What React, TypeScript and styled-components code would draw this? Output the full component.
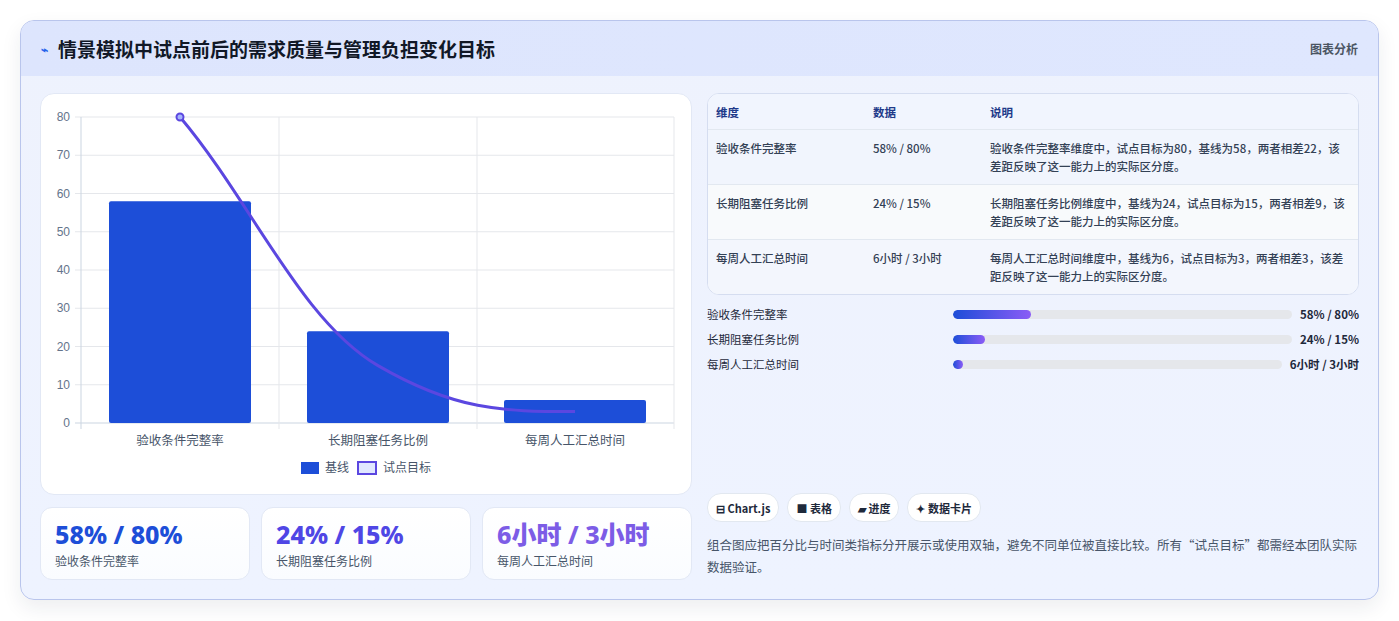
import React from 'react';
import styled, { createGlobalStyle } from 'styled-components';

const Global = createGlobalStyle`
  body { margin: 0; background: #f3f4f6; font-family: "Noto Sans CJK SC", "Noto Sans", sans-serif; color: #1e293b; }
`;

const rows = [
  { name: '验收条件完整率', data: '58% / 80%', note: '验收条件完整率维度中，试点目标为80，基线为58，两者相差22，该差距反映了这一能力上的实际区分度。', fill: 23, color: '#1d4ed8' },
  { name: '长期阻塞任务比例', data: '24% / 15%', note: '长期阻塞任务比例维度中，基线为24，试点目标为15，两者相差9，该差距反映了这一能力上的实际区分度。', fill: 9.5, color: '#4f46e5' },
  { name: '每周人工汇总时间', data: '6小时 / 3小时', note: '每周人工汇总时间维度中，基线为6，试点目标为3，两者相差3，该差距反映了这一能力上的实际区分度。', fill: 3, color: '#7c5ce6' },
];

const Page = styled.div`
  padding: 20px 20px 21px 20px;
  background: #fff;
`;
const Card = styled.div`
  border: 1px solid #b9c5ec;
  border-radius: 14px;
  background: linear-gradient(180deg, #eef2fd 0%, #eef3ff 100%);
  box-shadow: 0 8px 20px rgba(30, 41, 59, 0.08);
  overflow: hidden;
`;
const Header = styled.div`
  height: 55px;
  display: flex;
  align-items: center;
  justify-content: space-between;
  padding: 0 20px;
  background: linear-gradient(90deg, #dde5fd, #dfe7fe);
`;
const Title = styled.h1`
  margin: 0;
  font-size: 19px;
  font-weight: 700;
  color: #111827;
  display: flex;
  align-items: center;
  gap: 10px;
`;
const Tag = styled.span`
  font-size: 12px;
  font-weight: 700;
  color: #4b5563;
`;
const Body = styled.div`
  display: grid;
  grid-template-columns: 652px 652px;
  gap: 15px;
  padding: 17px 19px 19px 19px;
`;
const Col = styled.div`
  display: flex;
  flex-direction: column;
`;
const ChartBox = styled.div`
  height: 402px;
  background: #fff;
  border: 1px solid #e2e8f5;
  border-radius: 14px;
  box-sizing: border-box;
`;
const Stats = styled.div`
  display: grid;
  grid-template-columns: repeat(3, 1fr);
  gap: 11px;
  margin-top: 12px;
`;
const Stat = styled.div`
  height: 73px;
  box-sizing: border-box;
  padding: 10px 14px;
  background: linear-gradient(180deg, #fff, #fafcff);
  border: 1px solid #e2e8f5;
  border-radius: 12px;
`;
const StatValue = styled.div<{ $c: string }>`
  font-size: 25px;
  font-weight: 800;
  line-height: 32px;
  color: ${p => p.$c};
  font-family: "Noto Sans", "Noto Sans CJK SC", sans-serif;
`;
const StatLabel = styled.div`
  font-size: 12px;
  color: #475569;
  margin-top: 2px;
`;
const Table = styled.div`
  border: 1px solid #d5ddf0;
  border-radius: 12px;
  overflow: hidden;
  background: #fff;
`;
const Row = styled.div<{ $bg: string; $head?: boolean }>`
  display: grid;
  grid-template-columns: 157px 117px 1fr;
  padding: ${p => (p.$head ? '9px 8px 8px' : '9px 8px 9px')};
  background: ${p => p.$bg};
  border-bottom: 1px solid #e2e8f0;
  font-size: 11.5px;
  line-height: 18px;
  font-weight: ${p => (p.$head ? 700 : 500)};
  color: ${p => (p.$head ? '#1e3a8a' : '#334155')};
  &:last-child { border-bottom: none; }
`;
const Bars = styled.div`
  display: flex;
  flex-direction: column;
  gap: 6px;
  margin-top: 10px;
`;
const BarRow = styled.div`
  display: grid;
  grid-template-columns: 238px 1fr auto;
  align-items: center;
  gap: 8px;
  font-size: 11.5px;
  line-height: 19px;
  color: #1e293b;
`;
const Track = styled.div`
  height: 9px;
  background: #e5e7eb;
  border-radius: 5px;
  overflow: hidden;
`;
const Fill = styled.div`
  height: 100%;
  min-width: 9px;
  border-radius: 5px;
  background: linear-gradient(90deg, #1d4ed8, #8b5cf6);
`;
const Val = styled.span`
  font-weight: 700;
  text-align: right;
`;
const Chips = styled.div`
  display: flex;
  gap: 8px;
  margin-top: auto;
`;
const Chip = styled.span`
  height: 27px;
  padding: 0 8px;
  display: inline-flex;
  align-items: center;
  gap: 4px;
  background: #fff;
  border: 1px solid #e2e8f0;
  border-radius: 14px;
  font-size: 11px;
  font-weight: 700;
  color: #1e293b;
`;
const Note = styled.p`
  margin: 12px 0 2px;
  font-size: 12.5px;
  line-height: 22px;
  color: #475569;
`;

const y = (v: number) => 422 - v * 3.825;

const Chart = () => {
  const cats = ['验收条件完整率', '长期阻塞任务比例', '每周人工汇总时间'];
  const base = [58, 24, 6];
  const cx = [179, 377, 574];
  const xs = [80, 278, 476, 673];
  return (
    <svg width="652" height="402" viewBox="40 93 652 402" style={{ display: 'block' }}>
      {[0, 10, 20, 30, 40, 50, 60, 70, 80].map(v => (
        <g key={v}>
          <line x1="74" x2="673" y1={y(v)} y2={y(v)} stroke={v === 0 ? '#cbd5e1' : '#e5e7eb'} />
          <text x="69" y={y(v) + 4} fontSize="12" fill="#64748b" textAnchor="end" fontFamily="Liberation Sans, sans-serif">{v}</text>
        </g>
      ))}
      {xs.map(x => <line key={x} x1={x} x2={x} y1="116" y2="428" stroke={x === 80 ? '#cbd5e1' : '#e5e7eb'} />)}
      {base.map((v, i) => (
        <rect key={i} x={cx[i] - 71} y={y(v)} width="142" height={422 - y(v)} fill="#1d4ed8" rx="2" />
      ))}
      <path d={`M179 ${y(80)} C 250 200, 300 320, 377 ${y(15)} S 500 ${y(3)}, 574 ${y(3)}`} fill="none" stroke="#5b47e0" strokeWidth="3" />
      <circle cx="179" cy={y(80)} r="3.5" fill="#a5b4fc" stroke="#5b47e0" strokeWidth="2" />
      {cats.map((c, i) => (
        <text key={c} x={cx[i]} y="444" fontSize="12.5" fill="#475569" textAnchor="middle">{c}</text>
      ))}
      <rect x="300" y="461" width="18" height="12" fill="#1d4ed8" />
      <text x="324" y="471" fontSize="12" fill="#475569">基线</text>
      <rect x="357" y="461" width="18" height="12" fill="#e0e7ff" stroke="#5b47e0" strokeWidth="2" />
      <text x="382" y="471" fontSize="12" fill="#475569">试点目标</text>
    </svg>
  );
};

export default function App() {
  return (
    <Page>
      <Global />
      <Card>
        <Header>
          <Title><span style={{ color: '#2563eb', fontSize: 12 }}>⌁</span>情景模拟中试点前后的需求质量与管理负担变化目标</Title>
          <Tag>图表分析</Tag>
        </Header>
        <Body>
          <Col>
            <ChartBox><Chart /></ChartBox>
            <Stats>
              {rows.map(r => (
                <Stat key={r.name}>
                  <StatValue $c={r.color}>{r.data}</StatValue>
                  <StatLabel>{r.name}</StatLabel>
                </Stat>
              ))}
            </Stats>
          </Col>
          <Col>
            <Table>
              <Row $bg="#f1f5fe" $head><span>维度</span><span>数据</span><span>说明</span></Row>
              {rows.map((r, i) => (
                <Row key={r.name} $bg={i === 1 ? '#f8fafc' : i === 0 ? '#f1f5fd' : '#f3f6fd'}>
                  <span>{r.name}</span><span>{r.data}</span><span>{r.note}</span>
                </Row>
              ))}
            </Table>
            <Bars>
              {rows.map(r => (
                <BarRow key={r.name}>
                  <span>{r.name}</span>
                  <Track><Fill style={{ width: `${r.fill}%` }} /></Track>
                  <Val>{r.data}</Val>
                </BarRow>
              ))}
            </Bars>
            <Chips>
              <Chip>⊟ Chart.js</Chip>
              <Chip>■ 表格</Chip>
              <Chip>▰ 进度</Chip>
              <Chip>✦ 数据卡片</Chip>
            </Chips>
            <Note>组合图应把百分比与时间类指标分开展示或使用双轴，避免不同单位被直接比较。所有“试点目标”都需经本团队实际数据验证。</Note>
          </Col>
        </Body>
      </Card>
    </Page>
  );
}
